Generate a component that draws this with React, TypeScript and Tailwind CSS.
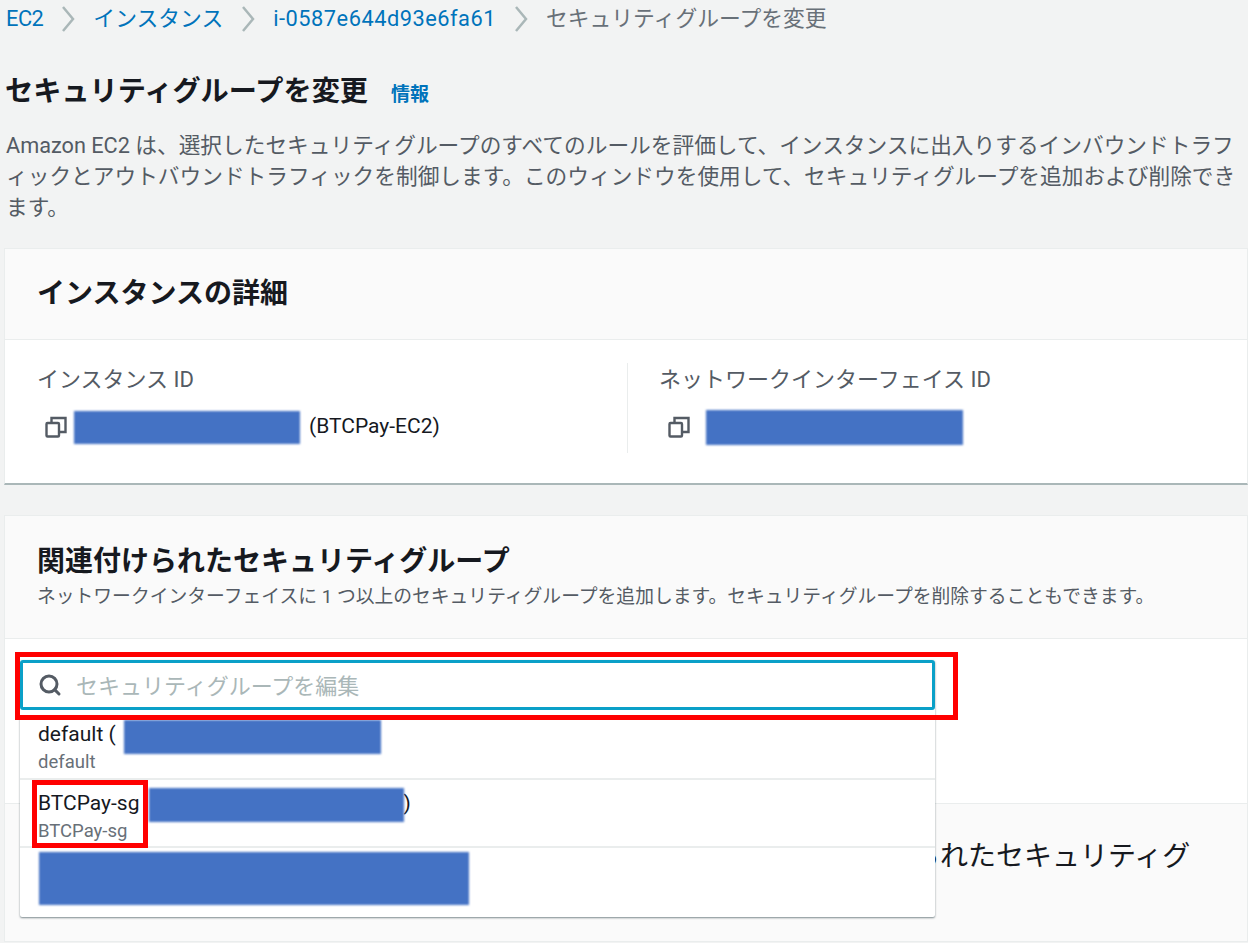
import { Search } from "lucide-react";

function Redact({ className }: { className: string }) {
  return <span className={`inline-block bg-[#4472c4] blur-[1px] ${className}`} />;
}

function CopyIcon() {
  return (
    <svg width="22" height="22" viewBox="0 0 22 22" fill="none" stroke="#545b64" strokeWidth="2.4" className="shrink-0">
      <rect x="1.5" y="7" width="12.5" height="13.5" rx="1" />
      <path d="M6.5 7V2h14v14H14" />
    </svg>
  );
}

function Crumb({ children }: { children: string }) {
  return <span className="text-[#0073bb]">{children}</span>;
}

function Sep() {
  return (
    <svg width="14" height="28" viewBox="0 0 14 28" fill="none" stroke="#aab7b8" strokeWidth="2.5" className="mx-[18px] shrink-0">
      <path d="M2 2l10 12L2 26" />
    </svg>
  );
}

export default function App() {
  return (
    <div className="relative w-[1248px] h-[943px] overflow-hidden bg-[#f2f3f3] font-['Roboto','Noto_Sans_CJK_JP',sans-serif] text-[#16191f]">
      {/* Breadcrumb */}
      <nav className="flex items-center h-[38px] pl-[6px] text-[21.8px] leading-[38px] whitespace-nowrap">
        <span className="text-[#0073bb] tracking-[-0.5px]">EC2</span>
        <Sep />
        <Crumb>インスタンス</Crumb>
        <Sep />
        <span className="text-[#0073bb] tracking-[0.5px]">i-0587e644d93e6fa61</span>
        <Sep />
        <span className="text-[#687078]">セキュリティグループを変更</span>
      </nav>

      {/* Page header */}
      <div className="flex items-center mt-[34px] pl-[5px] h-[40px]">
        <h1 className="text-[28.2px] font-bold leading-[40px]">セキュリティグループを変更</h1>
        <a className="ml-[23px] text-[#0073bb] text-[19px] font-bold mt-[6px]">情報</a>
      </div>
      <p className="mt-[18px] pl-[6px] text-[21.7px] leading-[31px] text-[#545b64] w-[1245px]">
        Amazon EC2 は、選択したセキュリティグループのすべてのルールを評価して、インスタンスに出入りするインバウンドトラフィックとアウトバウンドトラフィックを制御します。このウィンドウを使用して、セキュリティグループを追加および削除できます。
      </p>

      {/* Instance details */}
      <section className="mt-[25px] ml-[4px] bg-white border border-[#eaeded] border-b-2 border-b-[#aab7b8] h-[237px]">
        <div className="h-[91px] bg-[#fafafa] border-b border-[#eaeded] flex items-center pl-[32px]">
          <h2 className="text-[28px] font-bold">インスタンスの詳細</h2>
        </div>
        <div className="grid grid-cols-[623px_1fr] pt-[23px]">
          <div className="h-[90px] border-r border-[#eaeded] pl-[32px]">
            <div className="mt-[1px] text-[22px] leading-[32px] text-[#545b64]">インスタンス ID</div>
            <div className="flex items-center mt-[13px] pl-[8px] h-[36px] text-[21px]">
              <CopyIcon />
              <Redact className="w-[226px] h-[33px] ml-[7px] mr-[9px]" />
              (BTCPay-EC2)
            </div>
          </div>
          <div className="pl-[31px]">
            <div className="mt-[1px] text-[22px] leading-[32px] text-[#545b64]">ネットワークインターフェイス ID</div>
            <div className="flex items-center mt-[13px] pl-[9px] h-[36px]">
              <CopyIcon />
              <Redact className="w-[257px] h-[35px] ml-[16px]" />
            </div>
          </div>
        </div>
      </section>

      {/* Associated security groups */}
      <section className="mt-[30px] ml-[4px] bg-white border border-[#eaeded] h-[427px]">
        <div className="h-[123px] bg-[#fafafa] border-b border-[#eaeded] pl-[32px] pt-[27px]">
          <h2 className="text-[28px] font-bold leading-[38px]">関連付けられたセキュリティグループ</h2>
          <p className="text-[18.8px] leading-[28px] mt-[2px] text-[#545b64] whitespace-nowrap">
            ネットワークインターフェイスに 1 つ以上のセキュリティグループを追加します。セキュリティグループを削除することもできます。
          </p>
        </div>
        <div className="h-[165px] bg-white border-b border-[#eaeded]" />
        <div className="h-[137px] bg-[#fafafa] pl-[32px] pt-[33px]">
          <div className="text-[28px] leading-[40px] whitespace-nowrap">
            <span className="inline-block w-[875px]" />
            られたセキュリティグ
          </div>
        </div>
      </section>

      {/* Search field and open dropdown */}
      <div className="absolute left-[20px] top-[660px] w-[915px] h-[257px] shadow-[0_1px_2px_rgba(0,28,36,0.5)] bg-white rounded-[2px]">
        <div className="flex items-center h-[50px] border-[3px] border-[#0aa0c8] rounded-[3px] pl-[15px] bg-white">
          <Search className="w-[24px] h-[24px] text-[#545b64]" strokeWidth={3} />
          <span className="ml-[14px] mt-[3px] text-[22px] text-[#aab7b8]">セキュリティグループを編集</span>
        </div>
        <div className="h-[70px] border-b-2 border-[#eaeded] pl-[18px] pt-[10px]">
          <div className="flex items-center h-[28px] text-[21px] leading-[28px]">
            default (
            <Redact className="w-[257px] h-[34px] ml-[8px] mt-[6px]" />
          </div>
          <div className="text-[18.5px] leading-[24px] mt-[2px] text-[#687078]">default</div>
        </div>
        <div className="h-[68px] border-b-2 border-[#eaeded] pl-[18px] pt-[9px]">
          <div className="flex items-center h-[28px] text-[21px] leading-[28px]">
            BTCPay-sg
            <Redact className="w-[255px] h-[34px] ml-[9px] mt-[4px]" />)
          </div>
          <div className="text-[18.5px] leading-[24px] mt-[2px] text-[#687078]">BTCPay-sg</div>
        </div>
        <div className="pl-[19px] pt-[4px]">
          <Redact className="w-[430px] h-[53px] block" />
        </div>
      </div>

      {/* Red annotation frames */}
      <div className="absolute left-[15px] top-[652px] w-[943px] h-[68px] border-[5px] border-[#ff0000]" />
      <div className="absolute left-[32px] top-[780px] w-[116px] h-[68px] border-[5px] border-[#ff0000]" />
    </div>
  );
}
